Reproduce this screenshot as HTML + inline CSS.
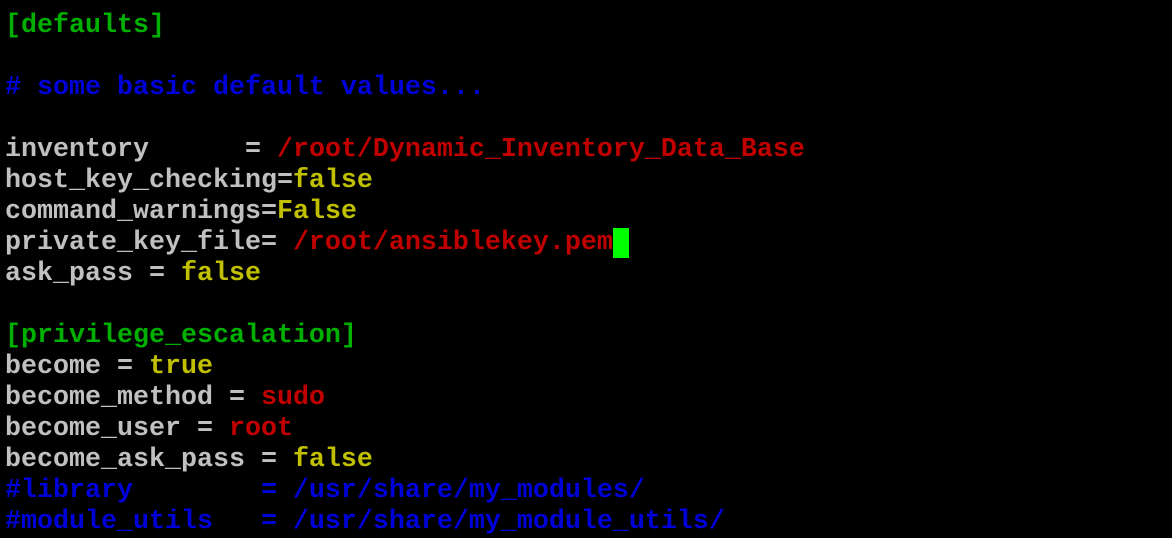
<!DOCTYPE html>
<html><head><style>
html,body{margin:0;padding:0;background:#000;width:1172px;height:532px;overflow:hidden}
pre{margin:0;position:absolute;left:5px;top:11px;font-family:"Liberation Mono",monospace;font-weight:bold;font-size:26.67px;line-height:31px;color:#c0c0c0;letter-spacing:0}
.g{color:#00b000}.b{color:#0000d8}.r{color:#c00000}.y{color:#c0c000}
.c{background:#00ff00;color:#00ff00}
</style></head><body>
<pre><span class="g">[defaults]</span>

<span class="b"># some basic default values...</span>

inventory      = <span class="r">/root/Dynamic_Inventory_Data_Base</span>
host_key_checking=<span class="y">false</span>
command_warnings=<span class="y">False</span>
private_key_file= <span class="r">/root/ansiblekey.pem</span><span class="c"> </span>
ask_pass = <span class="y">false</span>

<span class="g">[privilege_escalation]</span>
become = <span class="y">true</span>
become_method = <span class="r">sudo</span>
become_user = <span class="r">root</span>
become_ask_pass = <span class="y">false</span>
<span class="b">#library        = /usr/share/my_modules/</span>
<span class="b">#module_utils   = /usr/share/my_module_utils/</span>
</pre>
</body></html>
